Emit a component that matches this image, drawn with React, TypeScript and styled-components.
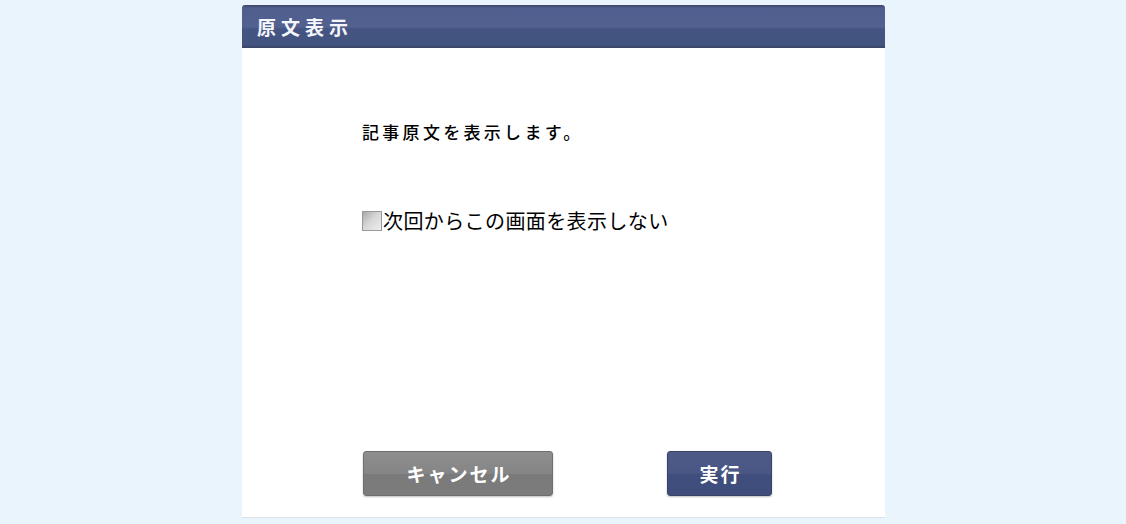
import styled, { createGlobalStyle } from "styled-components";
import { useState } from "react";

const GlobalStyle = createGlobalStyle`
  html, body {
    margin: 0;
    padding: 0;
    background: #eaf4fc;
  }
  body {
    font-family: "Liberation Sans", "Noto Sans CJK JP", sans-serif;
  }
`;

function App() {
  const [hide, setHide] = useState(false);

  return (
    <Page>
      <GlobalStyle />
      <Dialog>
        <Header>
          <Title>原文表示</Title>
        </Header>
        <Body>
          <Message>記事原文を表示します。</Message>
          <CheckRow>
            <CheckBox
              type="checkbox"
              checked={hide}
              onChange={(e) => setHide(e.currentTarget.checked)}
            />
            <CheckLabel>次回からこの画面を表示しない</CheckLabel>
          </CheckRow>
        </Body>
        <ButtonRow>
          <Button variant="cancel">キャンセル</Button>
          <Button variant="primary">実行</Button>
        </ButtonRow>
      </Dialog>
    </Page>
  );
}

const Page = styled.div`
  width: 1126px;
  height: 524px;
  padding: 5px 0 0 242px;
  box-sizing: border-box;
`;
const Dialog = styled.div`
  width: 643px;
  height: 512px;
  background: #ffffff;
  border-bottom: 1px solid #d8e2ea;
  display: flex;
  flex-direction: column;
`;
const Header = styled.div`
  height: 43px;
  display: flex;
  align-items: center;
  padding-left: 15px;
  border-radius: 3px 3px 0 0;
  background: linear-gradient(
    to bottom,
    #3d4568 0px,
    #4f5e8e 3px,
    #53618f 22px,
    #455583 24px,
    #43537f 40px,
    #3a4262 43px
  );
`;
const Title = styled.span`
  font-family: "Noto Sans CJK JP", sans-serif;
  font-size: 19px;
  font-weight: 700;
  color: #f4f6fb;
  letter-spacing: 5px;
`;
const Body = styled.div`
  flex: 1;
  padding: 74px 0 0 120px;
  display: flex;
  flex-direction: column;
  gap: 67px;
`;
const Message = styled.div`
  font-family: "Noto Sans CJK JP", sans-serif;
  font-size: 17px;
  font-weight: 500;
  line-height: 20px;
  letter-spacing: 3.3px;
  color: #000000;
`;
const CheckRow = styled.label`
  display: flex;
  align-items: center;
  cursor: pointer;
`;
const CheckBox = styled.input`
  appearance: none;
  margin: 0 1px 0 0;
  width: 20px;
  height: 20px;
  border: 1px solid #9a9a9a;
  background: linear-gradient(135deg, #a8a8a8 0%, #d6d6d6 45%, #eeeeee 100%);
  box-sizing: border-box;
  &:checked {
    background: linear-gradient(135deg, #8a8a8a, #c8c8c8);
  }
`;
const CheckLabel = styled.span`
  font-family: "Noto Sans CJK JP", sans-serif;
  font-size: 20px;
  line-height: 24px;
  letter-spacing: 0.4px;
  color: #000000;
`;
const ButtonRow = styled.div`
  display: flex;
  gap: 114px;
  padding: 0 0 21px 121px;
`;
const Button = styled.button<{ variant: "cancel" | "primary" }>`
  height: 45px;
  width: ${(p) => (p.variant === "cancel" ? "190px" : "105px")};
  padding: 0 0 0 2px;
  border-radius: 3px;
  border: 1px solid ${(p) => (p.variant === "cancel" ? "#6e6e6e" : "#3a4366")};
  background: ${(p) =>
    p.variant === "cancel"
      ? "linear-gradient(to bottom, #8e8e8e 0%, #858585 50%, #7a7a7a 52%, #7c7c7c 100%)"
      : "linear-gradient(to bottom, #4d5a88 0%, #4a5784 50%, #3f4e7c 52%, #3e4d7b 100%)"};
  color: #ffffff;
  font-family: "Noto Sans CJK JP", sans-serif;
  font-size: 19px;
  font-weight: 700;
  letter-spacing: 2px;
  cursor: pointer;
  box-shadow: 0 1px 2px rgba(0, 0, 0, 0.25);
`;

export default App;
